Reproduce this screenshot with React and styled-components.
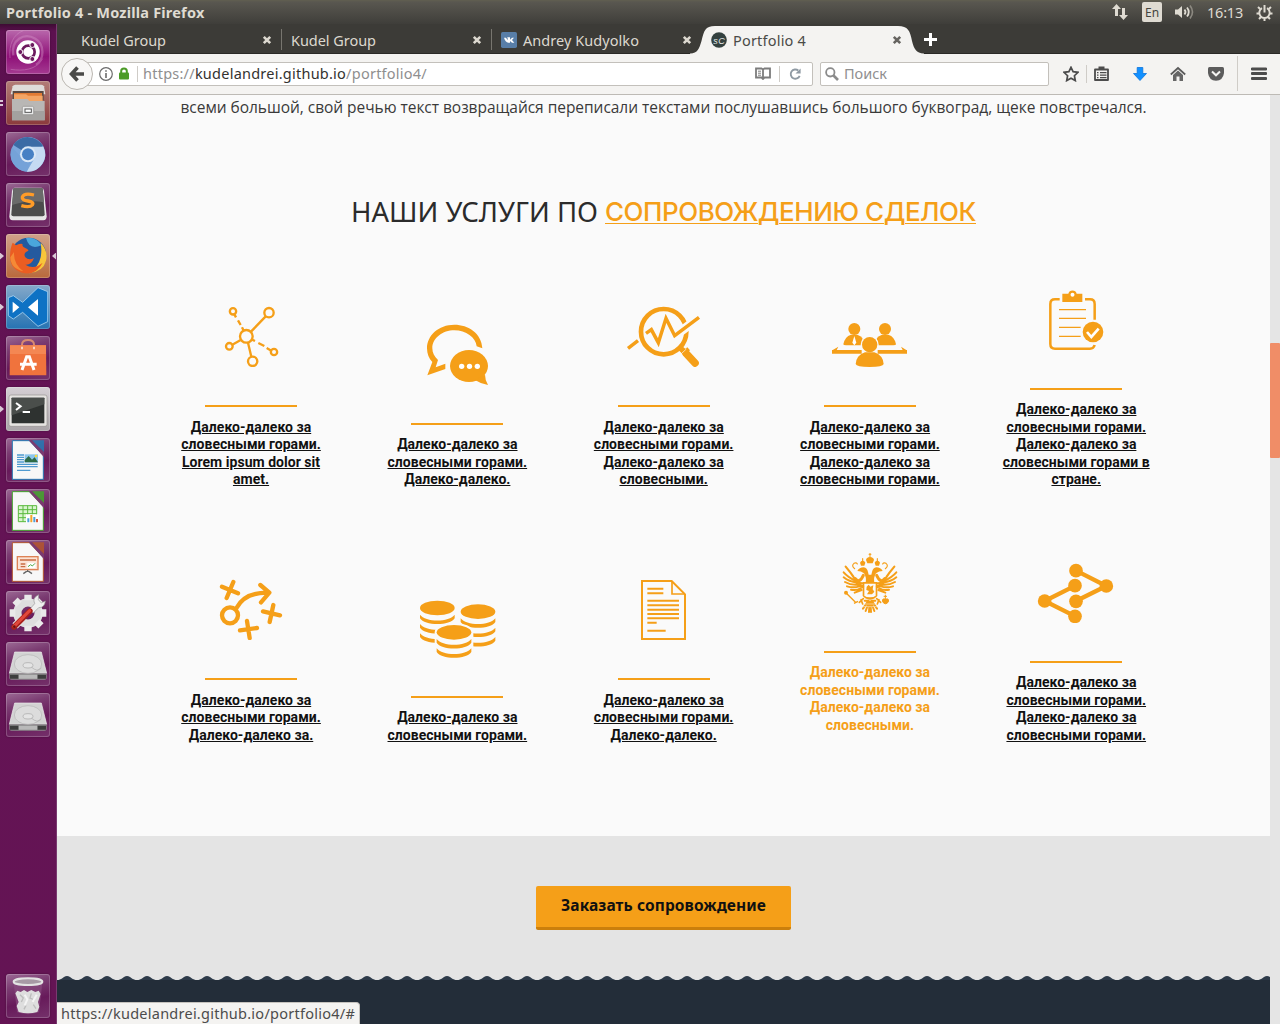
import React, { useLayoutEffect, useRef, useState } from "react";
import styled, { createGlobalStyle, css } from "styled-components";

const ORANGE = "#f59f18";
const PAGE = "#fafafa";
const UI_FONT = '"Noto Sans", "Open Sans", sans-serif';

const Global = createGlobalStyle`
  * { box-sizing: border-box; }
  body { margin: 0; overflow: hidden; font-family: ${UI_FONT}; }
  svg { display: block; flex: none; }
`;

/* ---------- text that keeps a fixed advance width ---------- */
const Run = styled.span`
  display: inline-block;
  white-space: pre;
  text-decoration: inherit;
`;

function Fit({ width, children }) {
  const ref = useRef(null);
  const [spacing, setSpacing] = useState(0);
  useLayoutEffect(() => {
    const el = ref.current;
    const natural = el.getBoundingClientRect().width;
    setSpacing((width - natural) / el.textContent.length);
  }, [width]);
  return (
    <Run ref={ref} style={{ letterSpacing: `${spacing}px` }}>
      {children}
    </Run>
  );
}

/* ---------- desktop frame ---------- */
const Desktop = styled.div`
  width: 1280px;
  height: 1024px;
  display: grid;
  grid-template: 24px 1fr / 57px 1fr;
  overflow: hidden;
`;

const TopBar = styled.header`
  grid-column: 1 / -1;
  display: flex;
  align-items: center;
  justify-content: space-between;
  padding: 0 7px 0 6px;
  background: linear-gradient(#615f50 0, #595750 2px, #3f3e3a 100%);
  color: #dfdbd2;
`;

const WindowTitle = styled.div`
  font-size: 14.5px;
  font-weight: 700;
  line-height: 24px;
`;

const Indicators = styled.div`
  display: flex;
  align-items: center;
  height: 24px;
`;

const Clock = styled.div`
  width: 49px;
  font-size: 14.5px;
  line-height: 24px;
`;

const LangBadge = styled.div`
  width: 20px;
  height: 20px;
  margin: 0 12px 0 13px;
  border-radius: 2px;
  background: #dfdbd2;
  color: #45443f;
  font-size: 12px;
  line-height: 21px;
  text-align: center;
`;

const Launcher = styled.nav`
  display: flex;
  flex-direction: column;
  gap: 7px;
  padding: 6px 0 6px 0;
  border-right: 1px solid #7a3a70;
  background: linear-gradient(#3d0b33 0, #5c104f 7px, #641355 40%, #641454 100%);
`;

const Slot = styled.div`
  display: flex;
  align-items: center;
  justify-content: space-between;
  height: 44px;
  &:last-child { margin-top: auto; }
`;

const Marks = styled.div`
  width: 6px;
  height: 8px;
  display: flex;
  flex-direction: column;
  justify-content: center;
  gap: 2px;
`;

const Arrow = styled.i`
  width: 4px;
  height: 7px;
  background: #d9c8d6;
  clip-path: polygon(0 0, 100% 50%, 0 100%);
  ${(p) => p.$left && css`transform: scaleX(-1); margin-left: 2px;`}
`;

const Dash = styled.i`
  width: 3px;
  height: 2px;
  background: #d9c8d6;
`;

const Tile = styled.div`
  width: 44px;
  height: 44px;
  border-radius: 3px;
  overflow: hidden;
  background: ${(p) => p.$bg};
  box-shadow: inset 0 0 0 1px rgba(255, 255, 255, 0.2), 0 0 2px rgba(0, 0, 0, 0.35);
`;

const Browser = styled.main`
  display: grid;
  grid-template-rows: 30px 41px 1fr;
  min-width: 0;
  position: relative;
`;

/* ---------- tabs ---------- */
const TabStrip = styled.div`
  display: flex;
  background: #3c3b37;
  border-bottom: 1px solid #2a2926;
  padding-left: 15px;
`;

const Tab = styled.div`
  width: 210px;
  height: 30px;
  display: flex;
  align-items: center;
  padding: 2px 10px 0 9px;
  position: relative;
  color: ${(p) => (p.$active ? "#4b4b48" : "#dcd8cf")};
  font-size: 14.5px;
  ${(p) => p.$divider && css`
    background: linear-gradient(#77756f, #77756f) 100% 5px / 1px 21px no-repeat;
  `}
`;

const TabCurve = styled.svg`
  position: absolute;
  left: -12px;
  top: 0;
`;

const TabIcon = styled.span`
  width: 16px;
  height: 16px;
  margin-right: 6px;
  position: relative;
`;

const TabText = styled.span`
  flex: 1;
  position: relative;
  line-height: 20px;
`;

const CloseMark = styled.svg`
  position: relative;
`;

const NewTab = styled.div`
  display: flex;
  align-items: center;
  padding: 2px 0 0 12px;
`;

/* ---------- navigation bar ---------- */
const NavBar = styled.div`
  display: flex;
  align-items: center;
  padding: 0 0 1px 4px;
  background: #f4f3f1;
  border-bottom: 1px solid #bdbab5;
`;

const BackButton = styled.div`
  width: 32px;
  height: 32px;
  flex: none;
  display: grid;
  place-items: center;
  border: 1px solid #bbb7b1;
  border-radius: 50%;
  background: #f8f7f6;
  z-index: 1;
`;

const Field = styled.div`
  height: 24px;
  display: flex;
  align-items: center;
  background: #fff;
  border: 1px solid #c3c0bb;
  border-radius: 2px;
  font-size: 14.5px;
  line-height: 23px;
  color: #8f8f8f;
`;

const UrlField = styled(Field)`
  width: 728px;
  margin-left: -8px;
  padding: 0 10px 0 13px;
  b { color: #33322f; font-weight: 400; }
`;

const SearchField = styled(Field)`
  width: 229px;
  margin-left: 7px;
  padding-left: 4px;
  gap: 5px;
`;

const Divider = styled.i`
  width: 1px;
  height: ${(p) => p.$h || 16}px;
  margin: ${(p) => p.$m || "0 5px"};
  background: #cfccc7;
`;

const Grow = styled.span`
  flex: 1;
`;

const Tools = styled.div`
  flex: 1;
  display: flex;
  align-items: center;
  padding: 0 12px 0 14px;
`;

const Tool = styled.span`
  width: ${(p) => p.$w}px;
`;

/* ---------- page ---------- */
const Viewport = styled.div`
  display: grid;
  grid-template-columns: 1213px 10px;
  min-height: 0;
  overflow: hidden;
`;

const Page = styled.div`
  display: flex;
  flex-direction: column;
`;

const Scrollbar = styled.div`
  background: #e5e5e5;
  padding-top: 248px;
`;

const Thumb = styled.div`
  height: 115px;
  border-radius: 1px;
  background: #f08d67;
`;

const Services = styled.section`
  height: 741px;
  background: ${PAGE};
  color: #333;
  display: flex;
  flex-direction: column;
  align-items: center;
`;

const Intro = styled.p`
  margin: 0;
  height: 26px;
  font: 400 15.5px/25px "Open Sans", sans-serif;
  color: #3a3a3a;
`;

const Heading = styled.h2`
  margin: 68px 0 0;
  height: 51px;
  display: flex;
  gap: 7px;
  font: 400 27.5px/46px "Noto Sans", sans-serif;
  color: #2b2b2b;
`;

const HeadingLink = styled.a`
  color: ${ORANGE};
  font: 500 26px/46px "Inter", "Open Sans", sans-serif;
  text-decoration: underline;
  text-decoration-thickness: 1px;
  text-underline-offset: 2px;
  text-decoration-skip-ink: auto;
`;

const ServiceRow = styled.div`
  width: 1031.5px;
  height: ${(p) => p.$h}px;
  margin-left: 0.3px;
  display: grid;
  grid-template-columns: repeat(5, 1fr);
  align-items: end;
`;

const Card = styled.a`
  display: flex;
  flex-direction: column;
  align-items: center;
  color: ${(p) => (p.$hover ? ORANGE : "#111")};
  text-decoration: ${(p) => (p.$hover ? "none" : "underline")};
  padding-bottom: ${(p) => (p.$hover ? 10 : 0)}px;
`;

const Rule = styled.span`
  width: 92px;
  height: 2px;
  margin: 38px 0 11.5px;
  background: ${ORANGE};
`;

const CardText = styled.span`
  width: 150px;
  font: 700 14px/17.5px Roboto, sans-serif;
  letter-spacing: 0.03px;
  text-align: center;
`;

const Order = styled.section`
  height: 139px;
  background: #e4e4e4;
  padding-top: 50px;
  display: flex;
  justify-content: center;
`;

const OrderButton = styled.button`
  width: 255px;
  height: 44px;
  padding: 0 0 2px;
  border: 0;
  border-bottom: 3px solid #cb7f0c;
  border-radius: 2px;
  background: ${ORANGE};
  color: #111;
  font: 700 15.5px/39px "Noto Sans", sans-serif;
`;

const Wave = styled.svg`
  background: #e4e4e4;
`;

const Footer = styled.footer`
  flex: 1;
  background: #232d39;
`;

const StatusBubble = styled.div`
  position: absolute;
  left: 0;
  bottom: 0;
  width: 303px;
  height: 22px;
  padding-left: 4px;
  border-top: 1px solid #c6c3be;
  border-right: 1px solid #c6c3be;
  border-radius: 0 4px 0 0;
  background: #f4f3f1;
  color: #4c4c4c;
  font-size: 14.5px;
  line-height: 21px;
`;

/* ---------- service icons ---------- */
const S = { fill: "none", stroke: ORANGE };

function ServiceIcon({ cx, line, children }) {
  return (
    <svg width="80" height="62" viewBox={`${cx - 120} ${line - 300} 240 186`} fill={ORANGE}>
      {children}
    </svg>
  );
}

const Network = () => (
  <ServiceIcon cx={243} line={375}>
    <g {...S} strokeWidth="7">
      <circle cx="189" cy="94" r="9.5" />
      <circle cx="297" cy="98" r="14" />
      <circle cx="229" cy="169" r="19" />
      <circle cx="178" cy="199" r="10" />
      <circle cx="312" cy="216" r="9.5" />
      <circle cx="248" cy="244" r="14" />
      <path d="M243 155L287 109M212 180L187 194M234 188L244 230" />
      <path d="M193 103l5 9M204 121l8 14M216 142l5 10M246 179l9 4M265 189l18 9M290 204l14 8" />
    </g>
  </ServiceIcon>
);

const Chat = () => (
  <ServiceIcon cx={861} line={429}>
    <path d="M937 205C935 160 895 134 853 134C805 134 771 167 771 205C771 222 777 236 787 246L772 286L826 267V251L797 262L804 240C793 230 787 219 787 205C787 174 818 151 853 151C888 151 917 172 920 199Z" />
    <ellipse cx="897" cy="258" rx="57" ry="48" />
    <path d="M915 300Q933 312 954 315Q945 300 945 284Z" />
    <g fill="#fff">
      <circle cx="875" cy="259" r="8" />
      <circle cx="898.500" cy="259" r="8" />
      <circle cx="922" cy="259" r="8" />
    </g>
  </ServiceIcon>
);

const Analysis = () => (
  <ServiceIcon cx={252} line={375}>
    <circle cx="251" cy="155" r="68" {...S} strokeWidth="14" />
    <path d="M284 168L345 122" fill="none" stroke={PAGE} strokeWidth="27" />
    <path d="M144 205L174 182M198 160L214 149L235 188L258 115L284 167L357 112" {...S} strokeWidth="10.500" />
    <path d="M296 200L314 216" {...S} strokeWidth="17" />
    <path d="M320 222L345 249" {...S} strokeWidth="23" strokeLinecap="round" />
    <path d="M303 216L322 202L330 211L310 228Z" />
    <path d="M304 221L319 207" fill="none" stroke={PAGE} strokeWidth="2" />
  </ServiceIcon>
);

const Meeting = () => (
  <ServiceIcon cx={870} line={375}>
    <circle cx="823" cy="147" r="18" />
    <circle cx="915" cy="147" r="18" />
    <path d="M790 193Q794 170 813 164H832Q842 167 848 175L844 196H798Q790 196 790 193Z" />
    <path d="M948 193Q944 170 925 164H906Q896 167 890 175L895 196H940Q948 196 948 193Z" />
    <path d="M823 168L829 188L823 196L817 188Z" fill="#fff" />
    <path d="M756 210H845V221H756ZM893 210H981V221H893Z" />
    <path d="M757 211L775 200L770 210ZM980 211L963 200L968 210Z" />
    <circle cx="869" cy="194" r="27" fill={PAGE} />
    <circle cx="869" cy="194" r="23" />
    <path d="M827 252Q829 226 855 217H883Q909 226 911 252Q909 261 869 261Q829 261 827 252Z" />
  </ServiceIcon>
);

const Checklist = () => (
  <ServiceIcon cx={288} line={324}>
    <path d="M239 58H225Q211 58 211 72V192Q211 206 225 206H330Q341 206 344 195M315 58H330Q344 58 344 72V119" {...S} strokeWidth="7.500" />
    <path d="M247 41H265A13 13 0 0 1 290 41H307V66H247Z" />
    <circle cx="277.500" cy="44" r="6" fill="#fff" />
    <path d="M237 89H318M237 115H318M237 142H302M237 169H302" {...S} strokeWidth="4" />
    <circle cx="339" cy="156" r="31" />
    <path d="M321 156L334 171L356 146" fill="none" stroke="#fff" strokeWidth="8" />
  </ServiceIcon>
);

const Tactics = () => (
  <ServiceIcon cx={243} line={414}>
    <g {...S} strokeWidth="13" strokeLinecap="round" strokeLinejoin="round">
      <path d="M156 140L204 160M190 126L170 174M279 214L330 226M310 195L299 246M210 271L261 264M231 243L239 294" />
      <circle cx="180" cy="226" r="24" />
      <path d="M200 203C218 170 250 157 295 158M271 135L298 158L273 187" />
    </g>
  </ServiceIcon>
);

const band = (x, y) =>
  `M${x - 52} ${y}C${x - 36} ${y + 23} ${x + 36} ${y + 23} ${x + 52} ${y}V${y + 11}C${x + 40} ${y + 34} ${x - 40} ${y + 34} ${x - 52} ${y + 11}Z`;

const Coins = () => (
  <ServiceIcon cx={861} line={468}>
    <ellipse cx="802" cy="204" rx="52" ry="22" />
    <path d={band(802, 224) + band(802, 252) + band(802, 280)} />
    <ellipse cx="924" cy="215" rx="52" ry="22" />
    <path d={band(924, 235) + band(924, 263) + band(924, 291)} />
    <path d="M800 277a52 22 0 0 1 104 0V340H800Z" fill={PAGE} stroke={PAGE} strokeWidth="12" />
    <ellipse cx="852" cy="277" rx="52" ry="22" />
    <path d={band(852, 297) + band(852, 325)} />
  </ServiceIcon>
);

const Document = () => (
  <ServiceIcon cx={252} line={414}>
    <path d="M186 123H275L315 163V297H186Z" {...S} strokeWidth="6" />
    <path d="M276 123V162H315" {...S} strokeWidth="5" />
    <path d="M202 146H250M202 160H250M202 182H297M202 195.500H297M202 209H297M202 222H297M202 235H297M202 248H230M202 272H257" {...S} strokeWidth="6" />
  </ServiceIcon>
);

const EagleHalf = () => (
  <g>
    <path d="M858 60Q859 52 870 51V70H862Z" />
    <path d="M840 68Q842 62 848 62Q854 62 856 68L853 77H843Z" />
    <path d="M832 93Q838 82 851 82Q862 84 864 96L866 104H870V128H857Q860 112 852 100Q843 93 832 93Z" />
    <g {...S} strokeLinecap="round">
      <path d="M848 56V63M824 86Q813 78 822 70Q829 66 832 72" strokeWidth="3.500" />
      <path d="M847 130Q830 130 820 110Q812 98 797 80" strokeWidth="6.500" />
      <path d="M828 123Q804 112 791 97M831 128Q807 125 791 112M834 134Q812 136 795 126M838 139Q820 145 801 139M843 144Q830 153 813 149M845 150L824 158" strokeWidth="6" />
      <path d="M826 116Q838 132 850 106M832 132L848 140" strokeWidth="9" />
      <path d="M850 176L838 187M843 179L848 192" strokeWidth="5" />
      <path d="M864 184L849 206M867 186L857 213M869 186L867 216M866 182H854" strokeWidth="6" />
    </g>
    <path d="M848 126H870V131H853V167Q858 172 870 172V179Q855 177 848 168Z" />
  </g>
);

const Eagle = () => (
  <ServiceIcon cx={870} line={333}>
    <path d="M870 39V51M866 43H874" stroke={ORANGE} strokeWidth="3" />
    <EagleHalf />
    <g transform="translate(1740 0) scale(-1 1)"><EagleHalf /></g>
    <path d="M860 140L866 134L871 140L880 136L878 148L883 155L876 163H861L867 153L859 150Z" />
    <path d="M796 157L828 188M822 190L834 184" {...S} strokeWidth="4" />
    <circle cx="798" cy="158" r="6" />
    <path d="M909 177A9 9 0 1 0 924 177ZM916 164V178M911 169H921" stroke={ORANGE} strokeWidth="3" />
    <path d="M847 200H893M852 192H888" stroke={PAGE} strokeWidth="1.500" />
  </ServiceIcon>
);

const Links = () => (
  <ServiceIcon cx={288} line={363}>
    <path d="M288 92L379 138L288 183M286 137L194 183L286 229" {...S} strokeWidth="13" />
    {[[288, 92], [285, 137], [379, 138], [194, 183], [288, 184], [285, 229]].map(([x, y]) => (
      <circle key={`${x}-${y}`} cx={x} cy={y} r="20.500" />
    ))}
  </ServiceIcon>
);

const FAR = "Далеко-далеко за словесными";
const ROWS = [
  {
    h: 248.5,
    items: [
      [Network, `${FAR} горами. Lorem ipsum dolor sit amet.`],
      [Chat, `${FAR} горами. Далеко-далеко.`],
      [Analysis, `${FAR} горами. ${FAR}.`],
      [Meeting, `${FAR} горами. ${FAR} горами.`],
      [Checklist, `${FAR} горами. ${FAR} горами в стране.`],
    ],
  },
  {
    h: 255.8,
    items: [
      [Tactics, `${FAR} горами. Далеко-далеко за.`],
      [Coins, `${FAR} горами.`],
      [Document, `${FAR} горами. Далеко-далеко.`],
      [Eagle, `${FAR} горами. ${FAR}.`, true],
      [Links, `${FAR} горами. ${FAR} горами.`],
    ],
  },
];

/* ---------- launcher art ---------- */
const glass = "linear-gradient(165deg, #9c6a95 0, #7b3c72 28%, #671a5a 60%, #75326b 100%)";

const Art = ({ children }) => (
  <svg width="44" height="44" viewBox="0 0 132 132">{children}</svg>
);

const Ubuntu = () => (
  <Art>
    <g fill="none" stroke="#d79acb" strokeWidth="7" opacity=".4">
      <path d="M22 76C14 30 54 6 88 26C116 42 116 88 90 104" />
      <path d="M14 118C50 124 92 120 110 86M52 2C22 12 8 44 12 84" strokeWidth="3" />
    </g>
    <circle cx="66" cy="66" r="35" fill="#fff" />
    <circle cx="67" cy="66" r="19" fill="none" stroke="#6c1a5e" strokeWidth="8" />
    <g fill="#6c1a5e" stroke="#fff" strokeWidth="3">
      <circle cx="43" cy="66" r="7.500" /><circle cx="79" cy="45" r="7.500" /><circle cx="79" cy="87" r="7.500" />
    </g>
  </Art>
);

const Files = () => (
  <Art>
    <path d="M20 16Q22 11 28 11H106Q112 11 114 16L118 40H14Z" fill="#dedcda" />
    <path d="M20 30H113V58H20Z" fill="#5b4a43" />
    <path d="M24 36H108V58H24Z" fill="#e27b34" /><path d="M24 40H60L66 44H110V60H24Z" fill="#f3a565" />
    <path d="M18 54H64L70 60H116V118H18Z" fill="#b9b7b5" />
    <path d="M18 90H116V118H18Z" fill="#a3a19f" />
    <rect x="49" y="76" width="34" height="25" rx="4" fill="#e9e9e9" stroke="#8b8987" strokeWidth="2" />
    <rect x="57" y="84" width="19" height="10" fill="#fff" stroke="#555" strokeWidth="3" />
  </Art>
);

const Chromium = () => (
  <Art>
    <circle cx="66" cy="67" r="52" fill="#7ba7dc" />
    <path d="M66 67L22 39A52 52 0 0 1 111 42Z" fill="#3b6ba5" />
    <path d="M66 44H112A52 52 0 0 1 62 119L86 78Z" fill="#c5daf2" />
    <path d="M45 75L18 46A52 52 0 0 0 62 119L74 89Z" fill="#75a2d8" />
    <circle cx="66" cy="67" r="24" fill="#dbe8f6" /><circle cx="66" cy="67" r="18" fill="#4680c4" />
  </Art>
);

const Sublime = () => (
  <Art>
    <path d="M18 24Q20 14 26 14H106Q112 14 114 24L122 100Q122 112 112 112H20Q10 112 10 100Z" fill="#e6e6e6" />
    <path d="M22 16H110L116 94Q116 100 110 100H22Q16 100 16 94Z" fill="#4c4c4c" />
    <path d="M22 34L22 16H110L114 58Q70 48 18 66Z" fill="#6a6a6a" />
    <path d="M84 36Q54 29 49 42Q47 52 66 54Q85 57 79 66Q71 75 46 68" fill="none" stroke="#ff9c27" strokeWidth="10" />
  </Art>
);

const Firefox = () => (
  <Art>
    <circle cx="68" cy="64" r="53" fill="#245a9f" />
    <path d="M60 12Q92 8 106 34Q70 50 60 12Z" fill="#4aa7dc" />
    <path d="M104 26Q128 52 120 80Q112 112 70 118Q98 98 104 70Q108 48 104 26Z" fill="#f8c53a" />
    <path d="M20 26Q26 30 30 34Q40 28 50 30Q46 38 62 44Q74 50 60 54Q52 60 58 70Q68 80 84 72Q76 94 58 92Q84 108 110 86Q92 122 56 118Q14 110 12 70Q12 42 20 26Z" fill="#eb5d22" />
    <path d="M24 54Q22 90 52 112Q14 104 13 70Z" fill="#f58a36" />
  </Art>
);

const Code = () => (
  <Art>
    <path d="M96 8L125 20V110L96 124L50 82L22 102L7 92V38L22 32L50 52Z" fill="#0e72c4" stroke="#a9d4f2" strokeWidth="2.500" />
    <path d="M20 50V84L40 67ZM96 42V92L66 67Z" fill="#fff" />
  </Art>
);

const Software = () => (
  <Art>
    <path d="M48 40V26Q48 12 66 12Q84 12 84 26V40" fill="none" stroke="#d88a70" strokeWidth="6" />
    <path d="M12 28H120L121 118H11Z" fill="#f0733d" /><path d="M12 28H120V54H12Z" fill="#f48753" />
    <path d="M48 32V40M84 32V40" stroke="#fbd3c0" strokeWidth="6" />
    <path d="M48 102L62 62H70L84 102M42 85H92" fill="none" stroke="#fff" strokeWidth="9" />
  </Art>
);

const Terminal = () => (
  <Art>
    <rect x="9" y="24" width="114" height="94" rx="6" fill="#e6e4e1" stroke="#96938f" strokeWidth="2" />
    <rect x="17" y="32" width="98" height="77" rx="2" fill="#2e3230" /><path d="M17 32H115V52L17 85Z" fill="#4a4e4b" />
    <path d="M30 48L44 58L30 69M50 75H72" fill="none" stroke="#fff" strokeWidth="6" />
  </Art>
);

const Sheet = ({ color, children }) => (
  <Art>
    <path d="M19 8H70L112 52V124H19Z" fill="#f7f7f7" stroke={color} strokeWidth="3" />
    <path d="M68 6H80L114 42V58Z" fill="#7a3a70" />
    <path d="M78 7H114V42Z" fill={color} opacity=".85" />
    {children}
  </Art>
);

const Writer = () => (
  <Sheet color="#2579b4">
    <path d="M33 51H54M33 58H54M33 65H54M33 72H54M33 79H95M33 86H95M33 97H73" stroke="#4f9ad0" strokeWidth="4" />
    <rect x="56" y="49" width="40" height="25" fill="#8cc5ec" />
    <path d="M56 73V66L68 54L78 65L86 58L96 73Z" fill="#2e6b46" /><circle cx="90" cy="54" r="4" fill="#ffd83a" />
  </Sheet>
);

const Calc = () => (
  <Sheet color="#43a72c">
    <path d="M37 50H92V98H37ZM37 62H92M37 74H92M37 86H92M51 50V98M65 50V98M79 50V98" fill="#d9f4cf" stroke="#5aba3d" strokeWidth="3" />
    <rect x="60" y="76" width="38" height="26" fill="#fff" />
    <path d="M64 88h6v12h-6z" fill="#4d9fd8" /><path d="M73 78h6v22h-6z" fill="#f3a32b" /><path d="M82 84h6v16h-6z" fill="#4d9fd8" /><path d="M90 90h6v10h-6z" fill="#d95a3a" />
  </Sheet>
);

const Impress = () => (
  <Sheet color="#b4562c">
    <rect x="34" y="50" width="62" height="39" fill="#fbe3d5" stroke="#dd8255" strokeWidth="4" />
    <path d="M42 60H90M44 72H58M44 80H58" stroke="#c96d43" strokeWidth="4" />
    <rect x="64" y="68" width="25" height="16" fill="#fff" /><path d="M66 80L74 74L79 78L87 70" fill="none" stroke="#4da844" strokeWidth="3" />
    <path d="M65 90V94M65 92L52 101M65 92L78 101" stroke="#666" strokeWidth="4" />
  </Sheet>
);

const Settings = () => (
  <Art>
    <circle cx="66" cy="66" r="32" fill="none" stroke="#dedede" strokeWidth="25" />
    <g stroke="#e9e9e9" strokeWidth="22">
      {[0, 45, 90, 135].map((a) => (
        <path key={a} d="M66 11V28M66 104V121" transform={`rotate(${a} 66 66)`} />
      ))}
    </g>
    <path d="M70 56L86 38Q78 20 98 11L97 26L106 36L118 30Q116 50 98 50L82 66Z" fill="#efefef" stroke="#9a9a9a" strokeWidth="2" />
    <path d="M24 108L72 60" stroke="#a81f19" strokeWidth="16" strokeLinecap="round" />
    <path d="M24 106L71 59" stroke="#e0483c" strokeWidth="9" strokeLinecap="round" />
    <circle cx="25" cy="107" r="4" fill="#6c120e" />
  </Art>
);

const Drive = () => (
  <Art>
    <path d="M26 30H106L122 94H10Z" fill="#d3d3d3" stroke="#eee" strokeWidth="2" />
    <path d="M10 94H122V108Q122 113 116 113H16Q10 113 10 108Z" fill="#8a8a8a" /><path d="M12 98H38V110H12ZM94 98H120V110H94Z" fill="#3d3d3d" />
    <path d="M38 98H94V110H38Z" fill="#b9b9b9" />
    <ellipse cx="66" cy="66" rx="41" ry="28" fill="#dcdcdc" stroke="#b5b5b5" strokeWidth="2" />
    <ellipse cx="66" cy="70" rx="15" ry="8" fill="#e4e4e4" stroke="#a5a5a5" strokeWidth="2" />
    <path d="M76 75Q94 92 106 78" fill="none" stroke="#aaa" strokeWidth="2" />
  </Art>
);

const Trash = () => (
  <Art>
    <path d="M23 26L33 115Q66 126 99 115L109 26Z" fill="#8a4f81" opacity=".65" />
    <path d="M28 58L34 50L44 54L54 48L64 54L76 48L88 54L98 50L104 60L96 84L100 98L94 114Q66 122 38 114L32 96L38 84Z" fill="#dedede" />
    <path d="M42 62L52 72L46 84M76 58L72 72L86 78M60 94L54 106M82 92L90 104" fill="none" stroke="#bdbdbd" strokeWidth="4" />
    <path d="M56 62L64 76L56 94M92 62L80 84" fill="none" stroke="#f4f4f4" strokeWidth="6" />
    <ellipse cx="66" cy="23" rx="43" ry="10" fill="#a79aa5" stroke="#e3e3e3" strokeWidth="6" />
  </Art>
);

const APPS = [
  { Icon: Ubuntu, bg: "linear-gradient(#b968ac, #8f1178 60%, #a53b92)" },
  { Icon: Files, bg: "linear-gradient(#b27d77, #8b3a3c)", marks: "double" },
  { Icon: Chromium, bg: glass },
  { Icon: Sublime, bg: glass },
  { Icon: Firefox, bg: "linear-gradient(#d0a18a, #b9693c)", marks: "arrow", focused: true },
  { Icon: Code, bg: "linear-gradient(#85a9ca, #2673b2)", marks: "arrow" },
  { Icon: Software, bg: glass },
  { Icon: Terminal, bg: "linear-gradient(#d5cfd4, #a9a4a7)", marks: "arrow" },
  { Icon: Writer, bg: glass },
  { Icon: Calc, bg: glass },
  { Icon: Impress, bg: glass },
  { Icon: Settings, bg: glass },
  { Icon: Drive, bg: glass },
  { Icon: Drive, bg: glass },
  { Icon: Trash, bg: glass },
];

/* ---------- browser glyphs ---------- */
const Close = ({ color = "#dcd8cf" }) => (
  <CloseMark width="10" height="10" viewBox="0 0 10 10">
    <path d="M1.800 1.800L8.200 8.200M8.200 1.800L1.800 8.200" stroke={color} strokeWidth="2.600" />
  </CloseMark>
);

const Vk = () => (
  <svg width="16" height="16" viewBox="0 0 48 48">
    <rect width="48" height="48" rx="5" fill="#587ea8" />
    <path d="M9 17H15L20 25V18L18 16H27V23L33 17H39L33 24L40 32H33L27 27V32H22Q13 30 9 17Z" fill="#fff" />
  </svg>
);

const Sc = () => (
  <svg width="16" height="16" viewBox="0 0 16 16">
    <circle cx="8" cy="8" r="7.800" fill="#34413f" />
    <text x="2.200" y="11.500" fontSize="9" fontStyle="italic" fontFamily="Liberation Sans, sans-serif" fill="#e6eae8" textLength="11.500">sC</text>
  </svg>
);

export default function App() {
  return (
    <Desktop>
      <Global />
      <TopBar>
        <WindowTitle><Fit width={198.500}>Portfolio 4 - Mozilla Firefox</Fit></WindowTitle>
        <Indicators>
          <svg width="18" height="18" viewBox="0 0 18 18" fill="#dfdbd2">
            <path d="M5.500 1L10 6H7V13H4V6H1ZM12.500 17L17 12H14V5H11V12H8Z" />
          </svg>
          <LangBadge>En</LangBadge>
          <svg width="21" height="16" viewBox="0 0 21 16">
            <path d="M1 5.500H4L8 2V14L4 10.500H1Z" fill="#dfdbd2" />
            <path d="M10.500 5.500Q12.500 8 10.500 10.500M13 3.500Q16.500 8 13 12.500" fill="none" stroke="#dfdbd2" strokeWidth="1.800" />
            <path d="M16 1.500Q21 8 16 14.500" fill="none" stroke="#8c8981" strokeWidth="1.600" />
          </svg>
          <Tool $w={12} />
          <Clock><Fit width={36}>16:13</Fit></Clock>
          <svg width="17" height="17" viewBox="0 0 17 17" fill="none" stroke="#dfdbd2">
            <path d="M11 4.200A5.200 5.200 0 1 1 6 4.200" strokeWidth="1.900" />
            <path d="M8.500 1V8.500" strokeWidth="2" />
            <path d="M2 3L4.200 5M15 3L12.800 5M.5 9.500H3M16.500 9.500H14M3 15L5 13M14 15L12 13M8.500 14.500V17" strokeWidth="2" />
          </svg>
        </Indicators>
      </TopBar>

      <Launcher>
        {APPS.map(({ Icon, bg, marks, focused }, i) => (
          <Slot key={i}>
            <Marks>
              {marks === "arrow" && <Arrow />}
              {marks === "double" && <><Dash /><Dash /></>}
            </Marks>
            <Tile $bg={bg}><Icon /></Tile>
            <Marks>{focused && <Arrow $left />}</Marks>
          </Slot>
        ))}
      </Launcher>

      <Browser>
        <TabStrip>
          <Tab $divider><TabText><Fit width={85}>Kudel Group</Fit></TabText><Close /></Tab>
          <Tab $divider><TabText><Fit width={85}>Kudel Group</Fit></TabText><Close /></Tab>
          <Tab><TabIcon><Vk /></TabIcon><TabText><Fit width={116}>Andrey Kudyolko</Fit></TabText><Close /></Tab>
          <Tab $active>
            <TabCurve width="234" height="30" viewBox="0 0 234 30">
              <path d="M0 30V29.500C8 29 9 25 11.500 17C14 7 15 2 25 2H208C218 2 220 7 222 17C224 25 226 29 234 29.500V30Z" fill="#f4f3f1" />
            </TabCurve>
            <TabIcon><Sc /></TabIcon>
            <TabText><Fit width={73}>Portfolio 4</Fit></TabText>
            <Close color="#666460" />
          </Tab>
          <NewTab>
            <svg width="13" height="13" viewBox="0 0 13 13"><path d="M6.500 0V13M0 6.500H13" stroke="#fff" strokeWidth="3" /></svg>
          </NewTab>
        </TabStrip>

        <NavBar>
          <BackButton>
            <svg width="16" height="16" viewBox="0 0 16 16" fill="none" stroke="#4a4a48" strokeWidth="3.600">
              <path d="M8.500 1.500L2.500 8L8.500 14.500M3 8H15" />
            </svg>
          </BackButton>
          <UrlField>
            <svg width="14" height="14" viewBox="0 0 14 14">
              <circle cx="7" cy="7" r="6.300" fill="none" stroke="#6b6b6b" strokeWidth="1.200" />
              <path d="M6.200 3.200H7.800V4.800H6.200ZM6.200 6H7.800V11H6.200Z" fill="#6b6b6b" />
            </svg>
            <Tool $w={5} />
            <svg width="12" height="13" viewBox="0 0 12 13">
              <path d="M3.200 7V4Q3.200 1.500 6 1.500Q8.800 1.500 8.800 4V7" fill="none" stroke="#4b9b27" strokeWidth="2" />
              <rect x="1" y="5.500" width="10" height="7" rx="1" fill="#4b9b27" />
            </svg>
            <Divider $m="0 5px 0 7px" />
            <Fit width={284}>https://<b>kudelandrei.github.io</b>/portfolio4/</Fit>
            <Grow />
            <svg width="16" height="13" viewBox="0 0 16 13" fill="none" stroke="#7c7c7c">
              <path d="M1 1.500H6.500L8 2.500L9.500 1.500H15V10.500H9.500L8 12L6.500 10.500H1ZM8 3V11" strokeWidth="1.800" />
              <path d="M3 4.200H6M3 6.200H6M3 8.200H6" strokeWidth="1" />
            </svg>
            <Divider $m="0 9px 0 8px" />
            <svg width="13" height="14" viewBox="0 0 14 14">
              <path d="M11.500 9A5 5 0 1 1 10 3.200" fill="none" stroke="#8f9aa3" strokeWidth="2" />
              <path d="M12.500 1V6.500H7Z" fill="#8f9aa3" />
            </svg>
          </UrlField>
          <SearchField>
            <svg width="14" height="14" viewBox="0 0 14 14" fill="none" stroke="#8b8b8b">
              <circle cx="5.300" cy="5.300" r="4.200" strokeWidth="1.800" /><path d="M8.500 8.500L13 13" strokeWidth="2.600" />
            </svg>
            <Fit width={43}>Поиск</Fit>
          </SearchField>
          <Tools>
            <svg width="16" height="16" viewBox="0 0 16 16">
              <path d="M8 1.300L10.100 5.700L15 6.300L11.400 9.700L12.300 14.600L8 12.200L3.700 14.600L4.600 9.700L1 6.300L5.900 5.700Z" fill="none" stroke="#4c4c4c" strokeWidth="1.700" />
            </svg>
            <Divider $h={18} $m="0 7px 0 7px" />
            <svg width="15" height="16" viewBox="0 0 15 16">
              <path d="M1 3.500H14V14H1Z" fill="none" stroke="#4c4c4c" strokeWidth="1.800" strokeLinejoin="round" />
              <path d="M4.500 .5H10.500V4H4.500ZM3 6H4.500V7.300H3ZM3 8.500H4.500V9.800H3ZM3 11H4.500V12.300H3ZM6 6H12.500V7.300H6ZM6 8.500H12.500V9.800H6ZM6 11H12.500V12.300H6Z" fill="#4c4c4c" />
            </svg>
            <Tool $w={24} />
            <svg width="14" height="16" viewBox="0 0 14 16">
              <path d="M4.200 1.500H9.800V7.500H13.500L7 14.500L.5 7.500H4.200Z" fill="#1290ff" stroke="#0a74dc" strokeWidth=".8" />
            </svg>
            <Tool $w={23} />
            <svg width="16" height="16" viewBox="0 0 16 16">
              <path d="M.8 8.500L8 2L15.200 8.500" fill="none" stroke="#5a5a5a" strokeWidth="1.700" />
              <path d="M3 9L8 4.500L13 9V15H9.500V10.500H6.500V15H3Z" fill="#666" />
            </svg>
            <Tool $w={22} />
            <svg width="16" height="16" viewBox="0 0 16 16">
              <path d="M1.500 1H14.500Q16 1 16 2.500V7Q15 14.500 8 14.800Q1 14.500 0 7V2.500Q0 1 1.500 1Z" fill="#5c5c5c" />
              <path d="M4 5.500L8 9.300L12 5.500" fill="none" stroke="#f4f3f1" strokeWidth="2" />
            </svg>
            <Divider $h={35} $m="0 13px 0 13px" />
            <svg width="16" height="14" viewBox="0 0 16 14">
              <path d="M1 2H15M1 6.500H15M1 11.500H15" stroke="#4c4c4c" strokeWidth="2.800" strokeLinecap="round" />
            </svg>
          </Tools>
        </NavBar>

        <Viewport>
          <Page>
            <Services>
              <Intro>
                <Fit width={966}>всеми большой, свой речью текст возвращайся переписали текстами послушавшись большого буквоград, щеке повстречался.</Fit>
              </Intro>
              <Heading>
                <Fit width={247}>НАШИ УСЛУГИ ПО</Fit>
                <HeadingLink><Fit width={371}>СОПРОВОЖДЕНИЮ СДЕЛОК</Fit></HeadingLink>
              </Heading>
              {ROWS.map((row) => (
                <ServiceRow key={row.h} $h={row.h}>
                  {row.items.map(([Icon, text, hover], i) => (
                    <Card key={i} $hover={hover}>
                      <Icon />
                      <Rule />
                      <CardText>{text}</CardText>
                    </Card>
                  ))}
                </ServiceRow>
              ))}
            </Services>
            <Order>
              <OrderButton><Fit width={205}>Заказать сопровождение</Fit></OrderButton>
            </Order>
            <Wave width="1213" height="5">
              <defs>
                <pattern id="scallop" width="20" height="5" patternUnits="userSpaceOnUse">
                  <path d="M1.500 5Q5 4 7 2Q10 0 13 2Q15 4 18.500 5Z" fill="#2e3b4a" />
                </pattern>
              </defs>
              <rect width="1213" height="5" fill="url(#scallop)" />
            </Wave>
            <Footer />
          </Page>
          <Scrollbar><Thumb /></Scrollbar>
        </Viewport>
        <StatusBubble><Fit width={294}>https://kudelandrei.github.io/portfolio4/#</Fit></StatusBubble>
      </Browser>
    </Desktop>
  );
}
